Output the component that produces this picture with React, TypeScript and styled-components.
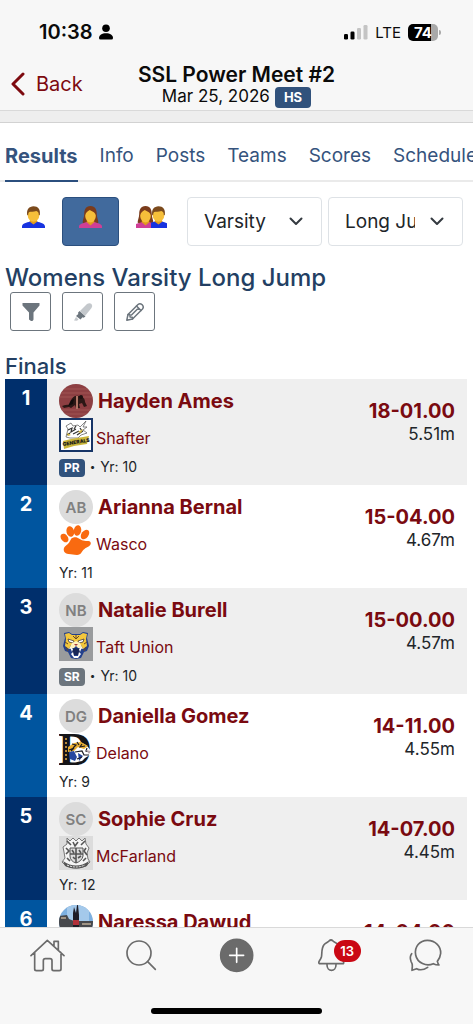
import React from "react";
import styled, { createGlobalStyle } from "styled-components";

const GlobalStyle = createGlobalStyle`
  *, *::before, *::after { box-sizing: border-box; }
  body {
    margin: 0;
    background: #fff;
    color: #212529;
    font-family: Inter, "Liberation Sans", sans-serif;
  }
  button, select { font: inherit; color: inherit; margin: 0; }
  a { color: inherit; text-decoration: none; }
  h1, h2, h3, p { margin: 0; }
`;

const Shell = styled.div`
  display: flex;
  flex-direction: column;
  height: 100vh;
`;

const Top = styled.header`
  flex: none;
  background: #f7f7f7;
  color: #0b0b0b;
  border-bottom: 1px solid #d2d2d2;
`;

const StatusBar = styled.div`
  display: flex;
  align-items: center;
  justify-content: space-between;
  height: 64px;
  padding: 0 32px 0 39px;
`;

const Clock = styled.div`
  display: flex;
  align-items: center;
  gap: 6px;
  font-size: 20px;
  font-weight: 600;
`;

const Signals = styled.div`
  display: flex;
  align-items: center;
  gap: 7px;
  font-size: 15px;
`;

const Battery = styled.div`
  display: flex;
  align-items: center;
  gap: 1px;
`;

const Charge = styled.div`
  width: 30px;
  border-radius: 5px;
  background: linear-gradient(to right, #000 76%, #a9a9a9 76%);
  color: #fff;
  font-size: 15px;
  font-weight: 700;
  line-height: 17px;
  text-align: center;
`;

const Cap = styled.div`
  width: 2px;
  height: 5px;
  border-radius: 0 2px 2px 0;
  background: #a9a9a9;
`;

const TitleBar = styled.div`
  display: grid;
  grid-template-columns: 1fr auto 1fr;
  height: 46px;
`;

const BackButton = styled.button`
  display: flex;
  align-items: center;
  justify-self: start;
  gap: 11px;
  height: 40px;
  padding: 0 10px;
  border: 0;
  background: none;
  color: #7d0a0f;
  font-size: 20px;
`;

const Titles = styled.div`
  text-align: center;
`;

const MeetName = styled.h1`
  font-size: 21px;
  font-weight: 600;
  line-height: 22px;
`;

const MeetDate = styled.div`
  display: flex;
  justify-content: center;
  align-items: flex-start;
  gap: 5px;
  font-size: 17px;
  line-height: 20px;
`;

const Level = styled.span`
  margin-top: 1px;
  padding: 0 9px;
  border-radius: 4px;
  background: #31527c;
  color: #fff;
  font-size: 13px;
  font-weight: 700;
  line-height: 21px;
`;

const Band = styled.div`
  height: 12px;
  border-top: 1px solid #d9d9d9;
  background: #eee;
`;

const Content = styled.main`
  flex: 1;
  min-height: 0;
  overflow: hidden auto;
  scrollbar-width: none;
`;

const Tabs = styled.nav`
  display: flex;
  gap: 22px;
  padding: 6px 0 0 5px;
  overflow: hidden;
  box-shadow: inset 0 -2px #eaeaea;
`;

const Tab = styled.a<{ $active?: boolean }>`
  flex: none;
  padding: 12px 0 9px;
  border-bottom: 2px solid ${(p) => (p.$active ? "#2b4f7e" : "transparent")};
  color: #35537d;
  font-size: ${(p) => (p.$active ? 20 : 19)}px;
  font-weight: ${(p) => (p.$active ? 700 : 400)};
  line-height: 30px;
`;

const Filters = styled.div`
  display: flex;
  gap: 3px;
  padding: 15px 10px 0 5px;
`;

const GenderGroup = styled.div`
  display: flex;
  flex: none;
`;

const GenderButton = styled.button<{ $active?: boolean }>`
  display: flex;
  height: 49px;
  padding: 8px 16px 0;
  border: 1px solid ${(p) => (p.$active ? "#2b4f7e" : "transparent")};
  border-radius: 4px;
  background: ${(p) => (p.$active ? "#416a9d" : "transparent")};
`;

const Selects = styled.div`
  display: flex;
  flex: 1;
  gap: 6px;
  min-width: 0;
`;

const SelectBox = styled.div`
  display: grid;
  flex: 1 1 0;
  min-width: 0;
  align-items: center;
  > * { grid-area: 1 / 1; }
  > svg {
    justify-self: end;
    margin-right: 19px;
    pointer-events: none;
  }
`;

const Select = styled.select`
  appearance: none;
  width: 100%;
  height: 49px;
  padding: 0 47px 0 16px;
  border: 1px solid #dee2e6;
  border-radius: 4px;
  background: #fff;
  font-size: 19px;
  text-overflow: clip;
`;

const EventTitle = styled.h2`
  padding: 18px 5px 0;
  color: #233f63;
  font-size: 24px;
  font-weight: 500;
  line-height: 28px;
`;

const Tools = styled.div`
  display: flex;
  gap: 11px;
  padding: 0 10px;
`;

const ToolButton = styled.button`
  display: flex;
  align-items: center;
  justify-content: center;
  width: 41px;
  height: 39px;
  padding: 0;
  border: 1px solid #6c757d;
  border-radius: 3px;
  background: #fff;
`;

const RoundTitle = styled.h3`
  padding: 22px 5px 0;
  color: #233f63;
  font-size: 22px;
  font-weight: 500;
  line-height: 26px;
`;

const TableWrap = styled.div`
  padding: 0 6px 0 5px;
`;

const ResultsTable = styled.table`
  width: 100%;
  border-collapse: collapse;
  td { padding: 0; vertical-align: top; }
`;

const ResultRow = styled.tr`
  --rank: #00559f;
  background: #fff;
  &:nth-child(odd) {
    --rank: #002f6c;
    background: #efefef;
  }
`;

const Rank = styled.td`
  width: 42px;
  background: var(--rank);
  color: #fff;
  font-size: 20px;
  font-weight: 700;
  line-height: 38px;
  text-align: center;
`;

const AthleteCell = styled.div`
  padding: 5px 0 0 12px;
`;

const Line = styled.div<{ $gap: number }>`
  display: flex;
  align-items: center;
  gap: ${(p) => p.$gap}px;
  height: 34px;
`;

const Avatar = styled.span`
  display: flex;
  align-items: center;
  justify-content: center;
  width: 34px;
  height: 34px;
  overflow: hidden;
  border-radius: 50%;
  background: #dcdcdc;
  color: #808080;
  font-size: 15px;
  font-weight: 600;
`;

const AthleteLink = styled.a`
  color: #7a0a10;
  font-size: 20px;
  font-weight: 700;
`;

const TeamLink = styled.a`
  padding-top: 5px;
  color: #7a0a10;
  font-size: 16px;
`;

const Meta = styled.div<{ $tagged: boolean }>`
  display: flex;
  align-items: center;
  gap: 5px;
  height: 28px;
  margin-bottom: ${(p) => (p.$tagged ? 5 : 2)}px;
  font-size: 14px;
`;

const Tag = styled.span<{ $season: boolean }>`
  margin-top: 3px;
  padding: 0 5px;
  border-radius: 4px;
  background: ${(p) => (p.$season ? "#6c757d" : "#31527c")};
  color: #fff;
  font-size: 12px;
  font-weight: 700;
  line-height: 18px;
`;

const Dot = styled.span`
  font-size: 10px;
`;

const MarkCell = styled.div`
  padding: 20px 12px 0 0;
  font-size: 17px;
  line-height: 22px;
  text-align: right;
`;

const MarkLink = styled.a`
  display: block;
  color: #7a0a10;
  font-size: 20px;
  font-weight: 700;
  line-height: 24px;
`;

const Bottom = styled.footer`
  flex: none;
  padding-bottom: 10px;
  border-top: 1px solid #d9d9d9;
  background: #f7f7f7;
`;

const BottomNav = styled.nav`
  display: flex;
  padding: 10px 0 35px;
`;

const NavButton = styled.button`
  display: flex;
  flex: 1 1 0;
  justify-content: center;
  padding: 0;
  border: 0;
  background: none;
`;

const NavIcon = styled.span`
  position: relative;
  display: block;
  width: 35px;
  height: 35px;
`;

const Count = styled.span`
  position: absolute;
  top: 2px;
  left: 20px;
  width: 27px;
  border-radius: 11px;
  background: #ca0814;
  color: #fff;
  font-size: 13px;
  font-weight: 600;
  line-height: 22px;
  text-align: center;
`;

const HomeBar = styled.div`
  width: 36%;
  height: 6px;
  margin: 0 auto;
  border-radius: 3px;
  background: #000;
`;

const skin = "#f6bf3a";

const ManArt = () => (
  <g>
    <path d="M0 22V20.500C0 17.500 5 16.500 8 15.500H15C18 16.500 23 17.500 23 20.500V22Z" fill="#1733e0" />
    <path d="M7.500 15.600L11.500 18.600L15.500 15.600L13.800 12H9.200Z" fill="#e09a1c" />
    <ellipse cx="11.500" cy="9.200" rx="5.800" ry="6.600" fill={skin} />
    <path d="M5.200 9C4.300 3.600 7.200.400 11.500.300C16 .300 18.700 3.600 17.800 9L16.800 9.200C17 6.500 15.800 5.300 14.300 5C11.500 6 8.500 5.400 7.200 6C6.200 7 6.200 8 6.200 9.200Z" fill="#7b4a1c" />
  </g>
);

const WomanArt = () => (
  <g>
    <path d="M11.500 0C6.500 0 5.300 4 5.200 8C5.100 11.500 3.800 13.500 3.600 16.500L8 19H15L19.400 16.500C19.200 13.500 17.900 11.500 17.800 8C17.700 4 16.500 0 11.500 0Z" fill="#7b3c1c" />
    <path d="M0 22V20.500C0 17.800 5 17 8 16H15C18 17 23 17.800 23 20.500V22Z" fill="#cf3f96" />
    <path d="M7.500 16L11.500 19.400L15.500 16L13.500 12.500H9.500Z" fill="#e09a1c" />
    <ellipse cx="11.500" cy="10" rx="5.300" ry="6.400" fill={skin} />
    <path d="M6.200 9.500C6.300 6.500 8.500 5.500 10.800 4C13 5.500 16.400 6 16.800 9.500C17.600 4 15 1.500 11.500 1.500C8 1.500 5.500 4 6.200 9.500Z" fill="#7b3c1c" />
  </g>
);

const Chevron = () => (
  <svg width="14" height="9" viewBox="0 0 14 9" fill="none" stroke="#343a40" strokeWidth="2" strokeLinecap="round" strokeLinejoin="round" aria-hidden="true">
    <path d="M1.500 1.500L7 7L12.500 1.500" />
  </svg>
);

const TrackPhoto = () => (
  <svg width="34" height="34" viewBox="0 0 34 34" aria-hidden="true">
    <rect width="34" height="34" fill="#8d3f42" />
    <path d="M0 5H34M0 9H34M0 13H34M0 26H34M0 30H34" stroke="#a05452" strokeWidth="1" />
    <path d="M3 22Q8 20 11 21L12 17C13 13 16 11 20 12C24 12 26 15 26 18L28 22L25 23L23 19L20 20L21 24H17L16 21L12 24L10 23L5 24Z" fill="#2b1715" />
    <path d="M17 12H19V25H17Z" fill="#b07565" />
    <path d="M12 16L15 15L14 20L9 22Z" fill="#120c0c" />
    <circle cx="22" cy="13" r="2" fill="#1a0f0f" />
  </svg>
);

const SkyPhoto = () => (
  <svg width="34" height="34" viewBox="0 0 34 34" aria-hidden="true">
    <rect width="34" height="34" fill="#7db0e0" />
    <path d="M8 0H30V16H8Z" fill="#a4c9eb" />
    <path d="M0 11L8 10L10 14L15 16H34V34H0Z" fill="#47484c" />
    <path d="M2 13H7M23 19H32" stroke="#a09383" strokeWidth="2" />
    <path d="M14 8L15 2L17 8L18 0H19L20 10V34H14Z" fill="#1d1b25" />
    <path d="M14 15H20V20H14Z" fill="#b23039" />
  </svg>
);

const GeneralsLogo = () => (
  <svg width="34" height="34" viewBox="0 0 34 34" aria-hidden="true">
    <rect x="1" y="1" width="32" height="32" fill="#fff" stroke="#173567" strokeWidth="2" />
    <path d="M7 19L9 11L7 8L12 5L14 8L19 7L21 9L27 3L24 9L28 9L24 12L28 15L22 17L19 20H11Z" fill="#fff" stroke="#555" strokeWidth=".700" />
    <path d="M9 12L13 10L12 14L17 11M14 16L20 13M17 8L15 11M21 10L23 13M8 17L11 15M18 17L24 13" stroke="#333" strokeWidth="1.200" fill="none" />
    <path d="M8 15L12 17L9 18ZM19 14L24 11L22 15Z" fill="#d6ba3b" />
    <path d="M4 23L12 21L30 18L28 26L15 28L5 31Z" fill="#cbb63b" />
    <text x="4" y="28" fontFamily="Inter, sans-serif" fontSize="5" fontWeight="900" fill="#1d1d19" transform="rotate(-9 4 28)">GENERALS</text>
  </svg>
);

const PawLogo = () => (
  <svg width="34" height="34" viewBox="0 0 34 34" fill="#f96a10" aria-hidden="true">
    <ellipse cx="5.500" cy="14" rx="3.400" ry="4.800" transform="rotate(-38 5.500 14)" />
    <ellipse cx="11.300" cy="7.500" rx="3.800" ry="5.300" transform="rotate(-14 11.300 7.500)" />
    <ellipse cx="18.500" cy="6.500" rx="3.700" ry="5.300" transform="rotate(12 18.500 6.500)" />
    <ellipse cx="26" cy="10.500" rx="3.500" ry="5.300" transform="rotate(38 26 10.500)" />
    <path d="M14.500 13.500C19 12.500 21 16 24 16.500C28 17.500 32 16 31.800 19.500C31 23 27.500 23 25.500 25C22.500 27 22.500 31 18 31C14.500 31 13 30 9.500 30C5.500 30 3.500 26 5.500 23C7.500 20.500 10 20 11 17C12 15 12.500 13.800 14.500 13.500Z" />
  </svg>
);

const WildcatLogo = () => (
  <svg width="34" height="34" viewBox="0 0 34 34" aria-hidden="true">
    <rect width="34" height="34" fill="#999b9d" />
    <path d="M5 6L10 5L13 7H21L24 5L29 6L28 11L30 19L28 24L25 25L22 31L17 32L12 31L9 25L6 24L4 19L6 11Z" fill="#23408d" />
    <path d="M6 7L10 6L13 8H21L24 6L28 7L27 12L28 19L24 22L22 18H12L10 22L6 19L7 12Z" fill="#f3c73c" />
    <path d="M9 12L15 14L14 16L10 15ZM25 12L19 14L20 16L24 15Z" fill="#fff" stroke="#31262a" strokeWidth=".700" />
    <path d="M13 16L17 14L21 16L24 22L19 21L17 19L15 21L10 22Z" fill="#fff0bd" />
    <path d="M15 17H19L17 19Z" fill="#a5393d" />
    <path d="M12 22L17 21L22 22L20 28H14Z" fill="#182758" />
    <path d="M11 20L13 25L14 22ZM23 20L21 25L20 22ZM12 27L14 25L15 29H19L20 25L22 27L19 31H15Z" fill="#fff" />
    <path d="M14 9L17 12L20 9M17 8V11M6 15L9 17M28 15L25 17M7 20L9 24M27 20L25 24" stroke="#694927" strokeWidth="1" fill="none" />
  </svg>
);

const TigerLogo = () => (
  <svg width="34" height="34" viewBox="0 0 34 34" aria-hidden="true">
    <text x="-1" y="32" fontFamily="Liberation Serif, serif" fontSize="47" fontWeight="700" fill="#151518">D</text>
    <path d="M7 5V29" stroke="#b68539" strokeWidth="2" strokeDasharray="2 2" />
    <path d="M11 12L15 9C22 8 27 12 29 14L32 18L31 22L26 25L23 28L17 29L11 26Z" fill="#fff" />
    <path d="M9 14L15 10L22 9L29 13L25 16L19 14L15 18L9 19Z" fill="#e8ae31" />
    <path d="M10 19L15 18L18 24L16 28L11 26ZM19 20L24 23L20 28Z" fill="#2747a0" />
    <path d="M13 11L17 12L14 15M18 9L20 12M10 17L15 15L12 18M23 11L21 14L26 13M16 19L23 18L25 22L30 22M18 26L23 24M28 15L27 18L31 19" fill="none" stroke="#1a1b24" strokeWidth="1.200" />
    <path d="M27 17L32 18L30 21Z" fill="#b8aab0" />
  </svg>
);

const CrestLogo = () => (
  <svg width="34" height="34" viewBox="0 0 34 34" aria-hidden="true">
    <rect width="34" height="34" fill="#dcdcdc" />
    <path d="M8 2L11 5L14 2L17 5L20 2L23 5L26 2L27 8L30 12L28 17L29 23L31 26L27 30L20 32H14L7 30L3 26L6 22L5 16L4 11L8 8Z" fill="#f5f5f5" stroke="#777" strokeWidth="1" />
    <path d="M11 12H24V20Q23 25 17 27Q11 25 11 20Z" fill="#ddd" stroke="#555" />
    <path d="M17 12V27M11 18H24M8 5L12 9M26 5L22 9M14 6L16 10L19 6M7 12L10 15L7 18M27 12L25 15L28 19M8 22L11 25M27 22L24 25M13 14L15 17M20 14L22 17M14 21L16 23M19 22L22 20" stroke="#555" strokeWidth="1.600" fill="none" />
    <path d="M4 25Q17 34 30 25L28 30Q17 35 6 30Z" fill="#555" />
    <path d="M8 29Q17 33 26 29" stroke="#eee" strokeDasharray="2 1" fill="none" />
  </svg>
);

type Result = {
  athlete: string;
  initials?: string;
  photo?: React.ReactNode;
  team: string;
  logo: React.ReactNode;
  tag?: "PR" | "SR";
  year: number;
  mark: string;
  metric: string;
};

const results: Result[] = [
  { athlete: "Hayden Ames", photo: <TrackPhoto />, team: "Shafter", logo: <GeneralsLogo />, tag: "PR", year: 10, mark: "18-01.00", metric: "5.51m" },
  { athlete: "Arianna Bernal", initials: "AB", team: "Wasco", logo: <PawLogo />, year: 11, mark: "15-04.00", metric: "4.67m" },
  { athlete: "Natalie Burell", initials: "NB", team: "Taft Union", logo: <WildcatLogo />, tag: "SR", year: 10, mark: "15-00.00", metric: "4.57m" },
  { athlete: "Daniella Gomez", initials: "DG", team: "Delano", logo: <TigerLogo />, year: 9, mark: "14-11.00", metric: "4.55m" },
  { athlete: "Sophie Cruz", initials: "SC", team: "McFarland", logo: <CrestLogo />, year: 12, mark: "14-07.00", metric: "4.45m" },
  { athlete: "Naressa Dawud", photo: <SkyPhoto />, team: "Wasco", logo: <PawLogo />, year: 11, mark: "14-04.00", metric: "4.37m" },
];

const line = {
  width: 35,
  height: 35,
  fill: "none",
  stroke: "#6b6b6b",
  strokeWidth: 5,
  strokeLinecap: "round",
  strokeLinejoin: "round",
  "aria-hidden": true,
} as const;

export default function App() {
  return (
    <Shell>
      <GlobalStyle />
      <Top>
        <StatusBar>
          <Clock>
            10:38
            <svg width="14" height="16" viewBox="0 0 14 16" aria-hidden="true">
              <circle cx="7" cy="4.300" r="3.800" />
              <path d="M0 14C0 11 3 9.300 7 9.300S14 11 14 14Q14 15.500 12.500 15.500H1.500Q0 15.500 0 14Z" />
            </svg>
          </Clock>
          <Signals>
            <svg width="24" height="16" viewBox="0 0 24 16" aria-hidden="true">
              <rect x="0" y="10" width="4" height="5.500" rx="1.300" />
              <rect x="6.500" y="7.500" width="4" height="8" rx="1.300" />
              <rect x="13" y="4" width="4" height="11.500" rx="1.300" fill="#c4c4c4" />
              <rect x="19.500" y="1" width="4" height="14.500" rx="1.300" fill="#c4c4c4" />
            </svg>
            LTE
            <Battery>
              <Charge>74</Charge>
              <Cap />
            </Battery>
          </Signals>
        </StatusBar>
        <TitleBar>
          <BackButton type="button">
            <svg width="15" height="24" viewBox="0 0 15 24" fill="none" stroke="#7d0a0f" strokeWidth="3" strokeLinecap="round" strokeLinejoin="round" aria-hidden="true">
              <path d="M13 2L3 12L13 22" />
            </svg>
            Back
          </BackButton>
          <Titles>
            <MeetName>SSL Power Meet #2</MeetName>
            <MeetDate>
              Mar 25, 2026 <Level>HS</Level>
            </MeetDate>
          </Titles>
        </TitleBar>
        <Band />
      </Top>

      <Content>
        <Tabs aria-label="Meet sections">
          <Tab href="#results" $active aria-current="page">Results</Tab>
          <Tab href="#info">Info</Tab>
          <Tab href="#posts">Posts</Tab>
          <Tab href="#teams">Teams</Tab>
          <Tab href="#scores">Scores</Tab>
          <Tab href="#schedule">Schedule</Tab>
        </Tabs>

        <Filters>
          <GenderGroup>
            <GenderButton type="button" aria-label="Men">
              <svg width="23" height="22" viewBox="0 0 23 22"><ManArt /></svg>
            </GenderButton>
            <GenderButton type="button" aria-label="Women" aria-pressed="true" $active>
              <svg width="23" height="22" viewBox="0 0 23 22"><WomanArt /></svg>
            </GenderButton>
            <GenderButton type="button" aria-label="Everyone">
              <svg width="31" height="22" viewBox="0 0 31 22">
                <svg width="19" height="22" viewBox="2 0 19 22"><WomanArt /></svg>
                <svg x="15" width="16" height="22" viewBox="4 0 16 22"><ManArt /></svg>
              </svg>
            </GenderButton>
          </GenderGroup>
          <Selects>
            <SelectBox>
              <Select aria-label="Division" defaultValue="Varsity">
                <option>Varsity</option>
              </Select>
              <Chevron />
            </SelectBox>
            <SelectBox>
              <Select aria-label="Event" defaultValue="Long Jump">
                <option>Long Jump</option>
              </Select>
              <Chevron />
            </SelectBox>
          </Selects>
        </Filters>

        <EventTitle>Womens Varsity Long Jump</EventTitle>
        <Tools>
          <ToolButton type="button" aria-label="Filter">
            <svg width="20" height="20" viewBox="0 0 20 20" fill="#6c757d">
              <path d="M1.500 1H18.500V3.500L12.500 10.500V17.500Q12 19.500 10 19L8 17.500V10.500L1.500 3.500Z" />
            </svg>
          </ToolButton>
          <ToolButton type="button" aria-label="Highlight">
            <svg width="20" height="20" viewBox="0 0 20 20">
              <path d="M7 9L14 2Q16.500.300 18.500 2Q20 4 18.500 6L12 14Z" fill="#c4c8cc" />
              <path d="M6.500 9L12.500 14.500L10.500 15.700L9.500 15.300L7.500 17.500L3 14L5.300 12L5 10.700Z" fill="#6c757d" />
              <path d="M3 15L5.500 17.500L4 18.800L1 18.500Z" fill="#c4c8cc" />
            </svg>
          </ToolButton>
          <ToolButton type="button" aria-label="Edit">
            <svg width="20" height="20" viewBox="0 0 20 20" fill="none" stroke="#6c757d" strokeWidth="1.500" strokeLinejoin="round" strokeLinecap="round">
              <path d="M1.800 18.200L3 12.500L13 2.500Q15 .800 17.200 2.800Q19.200 5 17.500 7L7.500 17Z" />
              <path d="M11.500 4L16 8.500M3 12.500L5 12.800V15L7.300 15.200L7.500 17M6.500 13L13.500 6" />
            </svg>
          </ToolButton>
        </Tools>

        <RoundTitle>Finals</RoundTitle>
        <TableWrap>
          <ResultsTable aria-label="Womens Varsity Long Jump finals">
            <tbody>
              {results.map((r, i) => (
                <ResultRow key={r.athlete}>
                  <Rank>{i + 1}</Rank>
                  <td>
                    <AthleteCell>
                      <Line $gap={5}>
                        <Avatar>{r.photo ?? r.initials}</Avatar>
                        <AthleteLink href="#athlete">{r.athlete}</AthleteLink>
                      </Line>
                      <Line $gap={3}>
                        {r.logo}
                        <TeamLink href="#team">{r.team}</TeamLink>
                      </Line>
                      <Meta $tagged={!!r.tag}>
                        {r.tag && <Tag $season={r.tag === "SR"}>{r.tag}</Tag>}
                        {r.tag && <Dot>•</Dot>}
                        <span>Yr: {r.year}</span>
                      </Meta>
                    </AthleteCell>
                  </td>
                  <td>
                    <MarkCell>
                      <MarkLink href="#mark">{r.mark}</MarkLink>
                      {r.metric}
                    </MarkCell>
                  </td>
                </ResultRow>
              ))}
            </tbody>
          </ResultsTable>
        </TableWrap>
      </Content>

      <Bottom>
        <BottomNav aria-label="Main">
          <NavButton type="button" aria-label="Home">
            <NavIcon>
              <svg {...line} viewBox="90 112 105 105">
                <path d="M93 165L142 119L192 165M104 156V205Q104 210 109 210H125Q130 210 130 205V180Q130 174 136 174H150Q156 174 156 180V205Q156 210 161 210H178Q183 210 183 205V156M162 136V122H175V148" />
              </svg>
            </NavIcon>
          </NavButton>
          <NavButton type="button" aria-label="Search">
            <NavIcon>
              <svg {...line} viewBox="374 112 105 105">
                <circle cx="419" cy="157" r="36" />
                <path d="M445 183L468 206" />
              </svg>
            </NavIcon>
          </NavButton>
          <NavButton type="button" aria-label="Add">
            <NavIcon>
              <svg {...line} viewBox="657 112 105 105">
                <circle cx="710" cy="164" r="48" fill="#6b6b6b" />
                <path d="M689 164H731M710 143V185" stroke="#fff" />
              </svg>
            </NavIcon>
          </NavButton>
          <NavButton type="button" aria-label="Notifications, 13 unread">
            <NavIcon>
              <svg {...line} viewBox="242 112 105 105">
                <path d="M258 189C252 184 261 179 264 170C267 158 263 144 272 132C277 126 284 125 287 121Q293 115 299 121C302 125 310 126 315 132C324 144 320 158 323 170C326 179 335 184 330 189ZM281 192C281 215 308 215 308 192" />
              </svg>
              <Count>13</Count>
            </NavIcon>
          </NavButton>
          <NavButton type="button" aria-label="Messages">
            <NavIcon>
              <svg {...line} viewBox="526 112 105 105">
                <path d="M614 182Q616 190 619 193Q609 193 602 189C581 199 554 187 549 163C544 138 562 119 584 119C609 119 625 138 624 158C623 168 620 175 614 182Z" />
                <path d="M537 159Q530 168 535 182Q540 190 539 197L538 209L552 204C563 210 576 206 585 200" />
              </svg>
            </NavIcon>
          </NavButton>
        </BottomNav>
        <HomeBar />
      </Bottom>
    </Shell>
  );
}
